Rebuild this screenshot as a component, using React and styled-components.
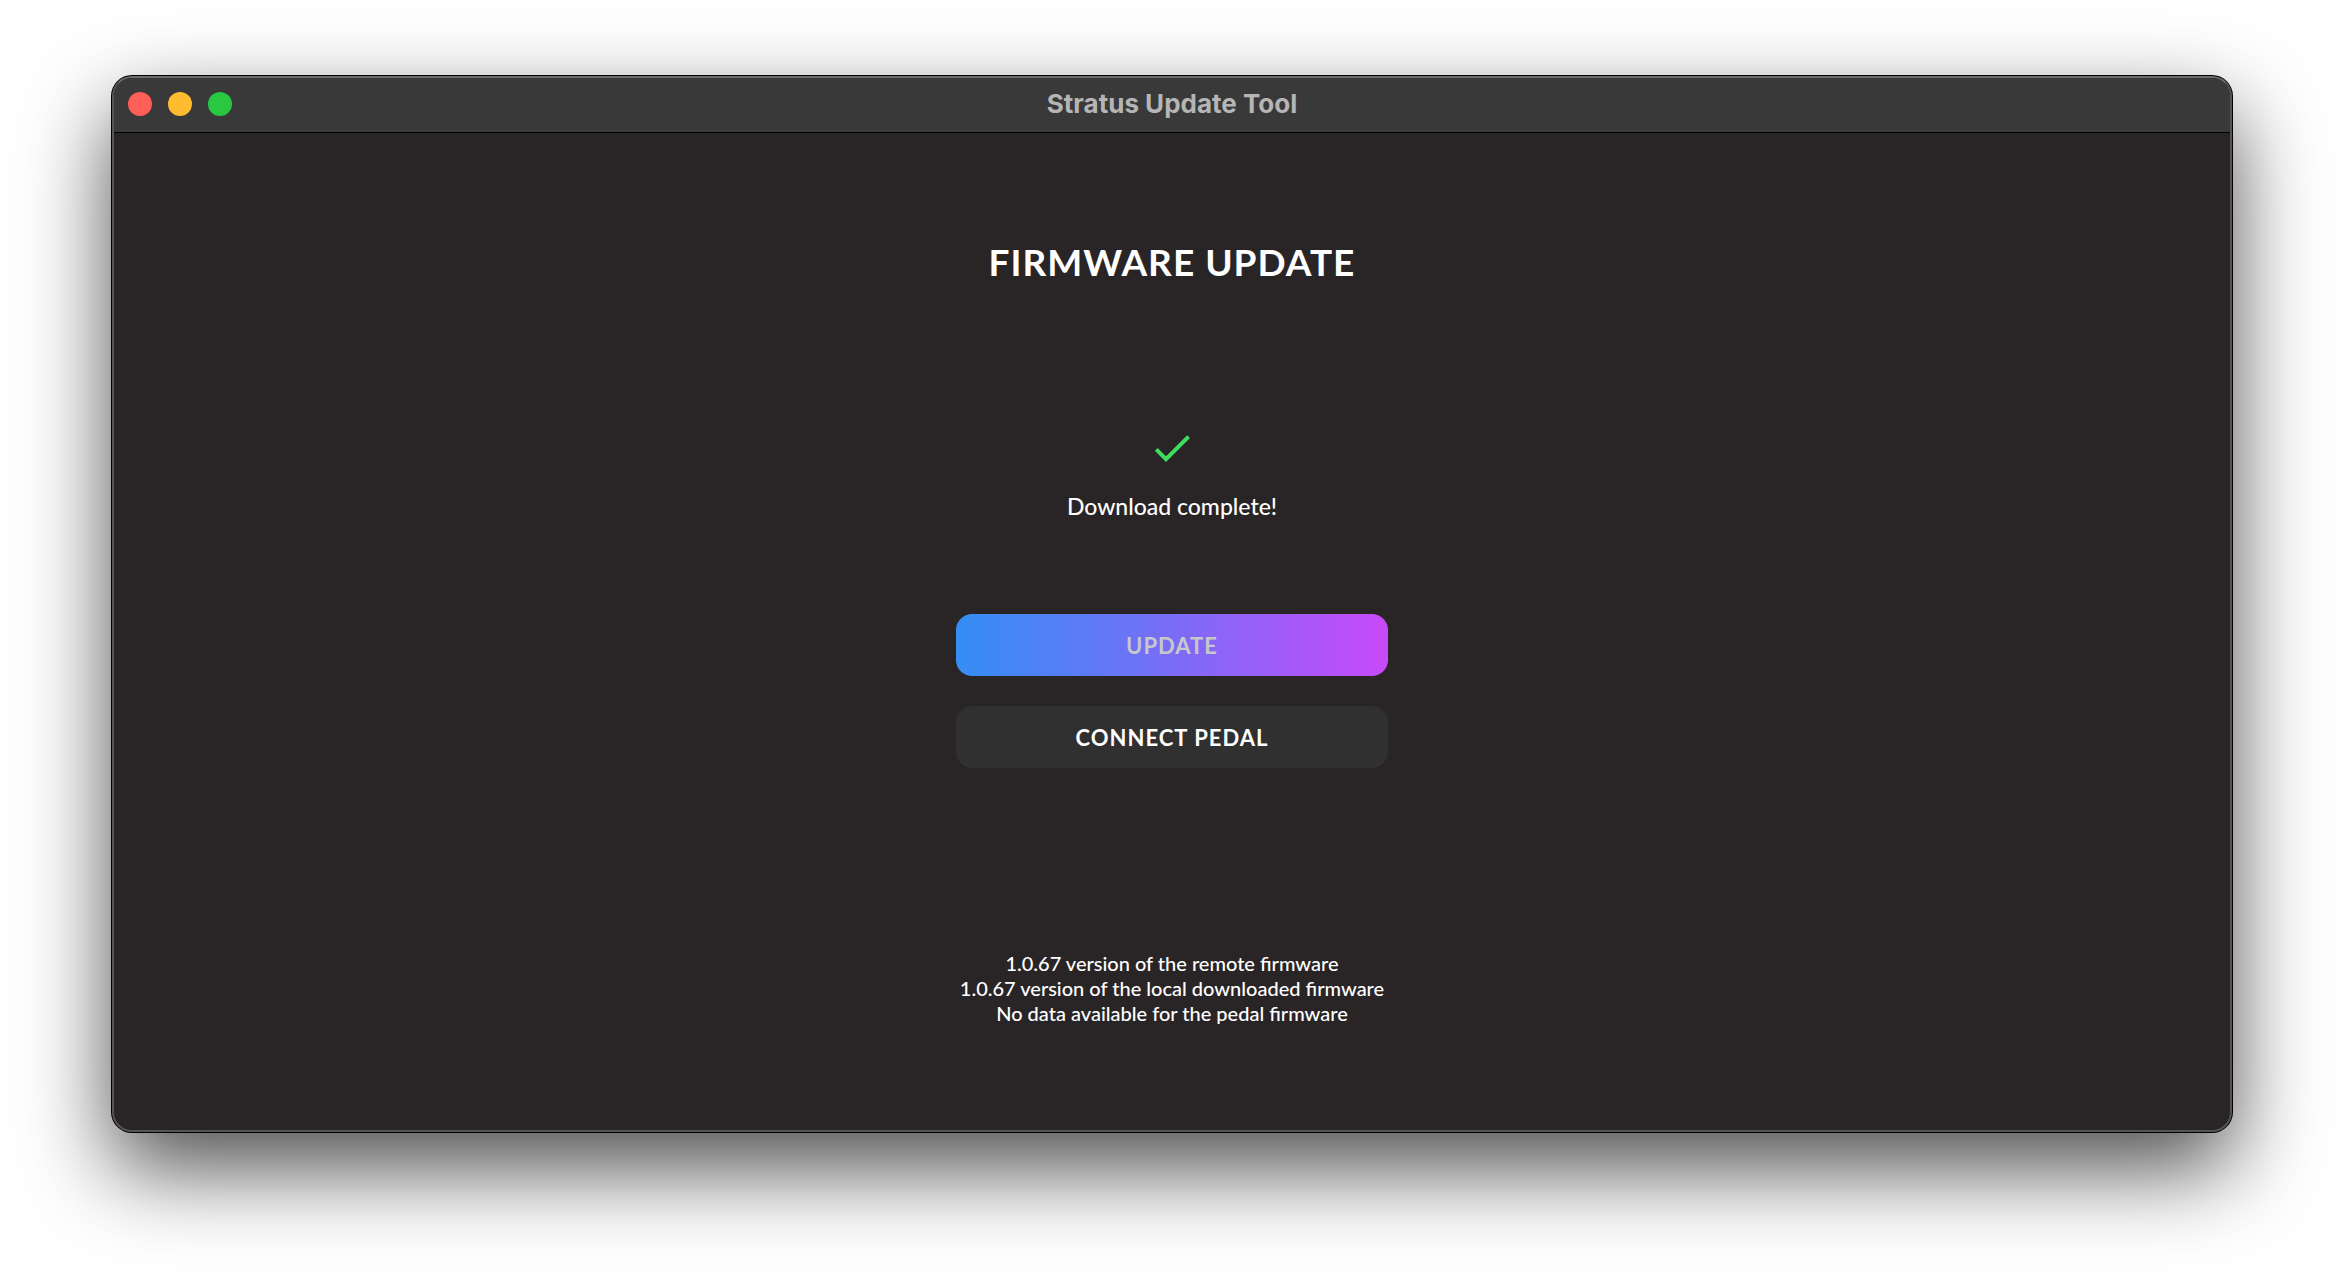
import React from 'react';
import styled, { createGlobalStyle } from 'styled-components';
import { MdCheck } from 'react-icons/md';

const GlobalStyle = createGlobalStyle`
  * {
    box-sizing: border-box;
  }

  body {
    margin: 0;
    background-color: #ffffff;
    font-family: 'Lato', 'Liberation Sans', sans-serif;
  }
`

const Desktop = styled.div`
  min-height: 100vh;
  display: flex;
  padding: 76px 112px 148px;
`

const Window = styled.div`
  flex: 1;
  display: flex;
  flex-direction: column;
  overflow: hidden;
  border: 2px solid #565455;
  border-top-color: #6c6c6c;
  border-radius: 20px;
  background-color: #292526;
  box-shadow: 0 0 0 1px #000000, 0 36px 88px rgba(0, 0, 0, 0.7);
`

const TitleBar = styled.header`
  height: 55px;
  display: grid;
  grid-template-columns: 1fr auto 1fr;
  align-items: center;
  padding: 0 14px 2px;
  border-bottom: 1px solid #000000;
  background-color: #393939;
`

const Lights = styled.div`
  display: flex;
  gap: 16px;
`

const Light = styled.button`
  width: 24px;
  height: 24px;
  padding: 0;
  border: none;
  border-radius: 50%;
  background-color: ${props => props.$color};
`

const WindowTitle = styled.div`
  color: #b5b5b5;
  font-family: 'Inter', 'Liberation Sans', sans-serif;
  font-size: 26px;
  font-weight: 700;
  line-height: 32px;
`

const Content = styled.main`
  flex: 1;
  display: flex;
  flex-direction: column;
  align-items: center;
  padding: 105px 24px 104px;
  color: #ffffff;
  text-align: center;
`

const Heading = styled.h1`
  margin: 0 0 138px;
  font-size: 37px;
  font-weight: 700;
  line-height: 48px;
  letter-spacing: 1px;
`

const Status = styled.div`
  display: flex;
  flex-direction: column;
  align-items: center;
  gap: 18px;
  margin-bottom: 92px;
`

const CheckIcon = styled(MdCheck)`
  color: #3ddc5f;
  font-size: 48px;
`

const StatusText = styled.p`
  margin: 0;
  font-size: 23px;
  font-weight: 500;
  line-height: 32px;
`

const Actions = styled.div`
  width: 432px;
  max-width: 100%;
  display: flex;
  flex-direction: column;
  gap: 30px;
`

const Button = styled.button`
  height: 62px;
  border: none;
  border-radius: 16px;
  color: #ffffff;
  background: ${props => props.$primary ? 'linear-gradient(90deg, #358ef4, #7270f6 45%, #c849f8)' : '#303030'};
  font-family: inherit;
  font-size: 22px;
  font-weight: 700;
  letter-spacing: 1px;

  &:disabled {
    color: #c8c8c8;
  }
`

const Versions = styled.footer`
  margin-top: auto;
  font-size: 20px;
  font-weight: 500;
  line-height: 25px;
`

const Version = styled.p`
  margin: 0;
`

const App = () => {
  const versions = [
    '1.0.67 version of the remote firmware',
    '1.0.67 version of the local downloaded firmware',
    'No data available for the pedal firmware',
  ];

  return (
    <Desktop>
      <GlobalStyle />
      <Window>
        <TitleBar>
          <Lights>
            <Light $color="#ff5f57" aria-label="Close" />
            <Light $color="#febc2e" aria-label="Minimize" />
            <Light $color="#28c840" aria-label="Zoom" />
          </Lights>
          <WindowTitle>Stratus Update Tool</WindowTitle>
        </TitleBar>
        <Content>
          <Heading>FIRMWARE UPDATE</Heading>
          <Status>
            <CheckIcon />
            <StatusText>Download complete!</StatusText>
          </Status>
          <Actions>
            <Button $primary disabled>UPDATE</Button>
            <Button>CONNECT PEDAL</Button>
          </Actions>
          <Versions>
            {versions.map(version => <Version key={version}>{version}</Version>)}
          </Versions>
        </Content>
      </Window>
    </Desktop>
  );
}

export default App;
